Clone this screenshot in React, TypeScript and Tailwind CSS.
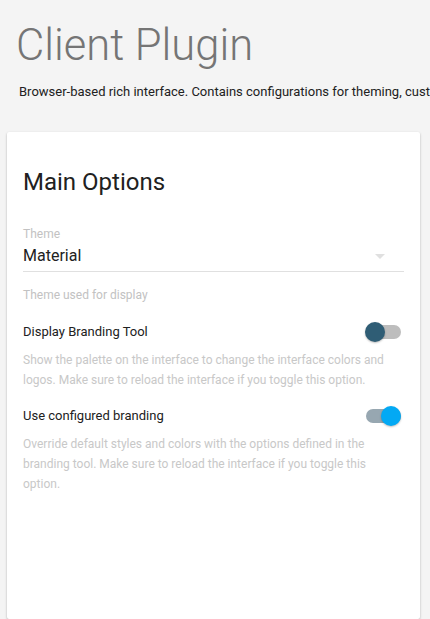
import React from "react";

function Toggle({ on }: { on: boolean }) {
  return (
    <div className="relative w-[36px] h-[20px] mr-[3px] shrink-0">
      <div
        className={
          "absolute left-[1px] right-0 top-[3px] h-[14px] rounded-full " +
          (on ? "bg-[#97a7b1]" : "bg-[#bdbdbd]")
        }
      />
      <div
        className={
          "absolute top-0 w-[20px] h-[20px] rounded-full shadow-[0_1px_2px_rgba(0,0,0,0.25)] " +
          (on ? "right-0 bg-[#03a9f4]" : "left-0 bg-[#2f5d75]")
        }
      />
    </div>
  );
}

export default function App() {
  return (
    <div
      className="h-[619px] overflow-hidden bg-[#f4f4f4] flex flex-col"
      style={{ fontFamily: "Roboto, 'Liberation Sans', sans-serif" }}
    >
      <div className="pl-[16px] pt-[22px]">
        <h1 className="text-[43.5px] leading-[48px] font-light text-[#757575] whitespace-nowrap">Client Plugin</h1>
        <p className="mt-[12px] ml-[3px] text-[13px] leading-[20px] text-[#212121] whitespace-nowrap">
          Browser-based rich interface. Contains configurations for theming, custom branding and more.
        </p>
      </div>
      <div className="mt-[30px] ml-[7px] mr-[10px] flex-1 bg-white rounded-[2px] shadow-[0_1px_3px_rgba(0,0,0,0.12),0_1px_2px_rgba(0,0,0,0.18)] px-[16px] pt-[34px]">
        <h2 className="text-[24px] leading-[32px] text-[#212121]">Main Options</h2>

        <div className="mt-[28px]">
          <div className="text-[12px] leading-[16px] text-[#c2c2c2]">Theme</div>
          <div className="mt-[2px] flex items-center justify-between pb-[3px] border-b border-[#e0e0e0]">
            <span className="text-[16px] leading-[24px] text-[#212121]">Material</span>
            <span className="mr-[19px] w-0 h-0 border-l-[5px] border-r-[5px] border-t-[5px] border-l-transparent border-r-transparent border-t-[#e0e0e0]" />
          </div>
          <div className="mt-[15px] text-[12px] leading-[16px] text-[#c2c2c2]">Theme used for display</div>
        </div>

        <div className="mt-[19px]">
          <div className="flex items-center justify-between">
            <span className="text-[13px] leading-[20px] text-[#212121]">Display Branding Tool</span>
            <Toggle on={false} />
          </div>
          <p className="mt-[8px] text-[12px] leading-[20px] text-[#c8c8c8]">
            Show the palette on the interface to change the interface colors and logos. Make sure to reload the interface if you toggle this option.
          </p>
        </div>

        <div className="mt-[16px]">
          <div className="flex items-center justify-between">
            <span className="text-[13px] leading-[20px] text-[#212121]">Use configured branding</span>
            <Toggle on={true} />
          </div>
          <p className="mt-[8px] text-[12px] leading-[20px] text-[#c8c8c8]">
            Override default styles and colors with the options defined in the branding tool. Make sure to reload the interface if you toggle this option.
          </p>
        </div>
      </div>
    </div>
  );
}
